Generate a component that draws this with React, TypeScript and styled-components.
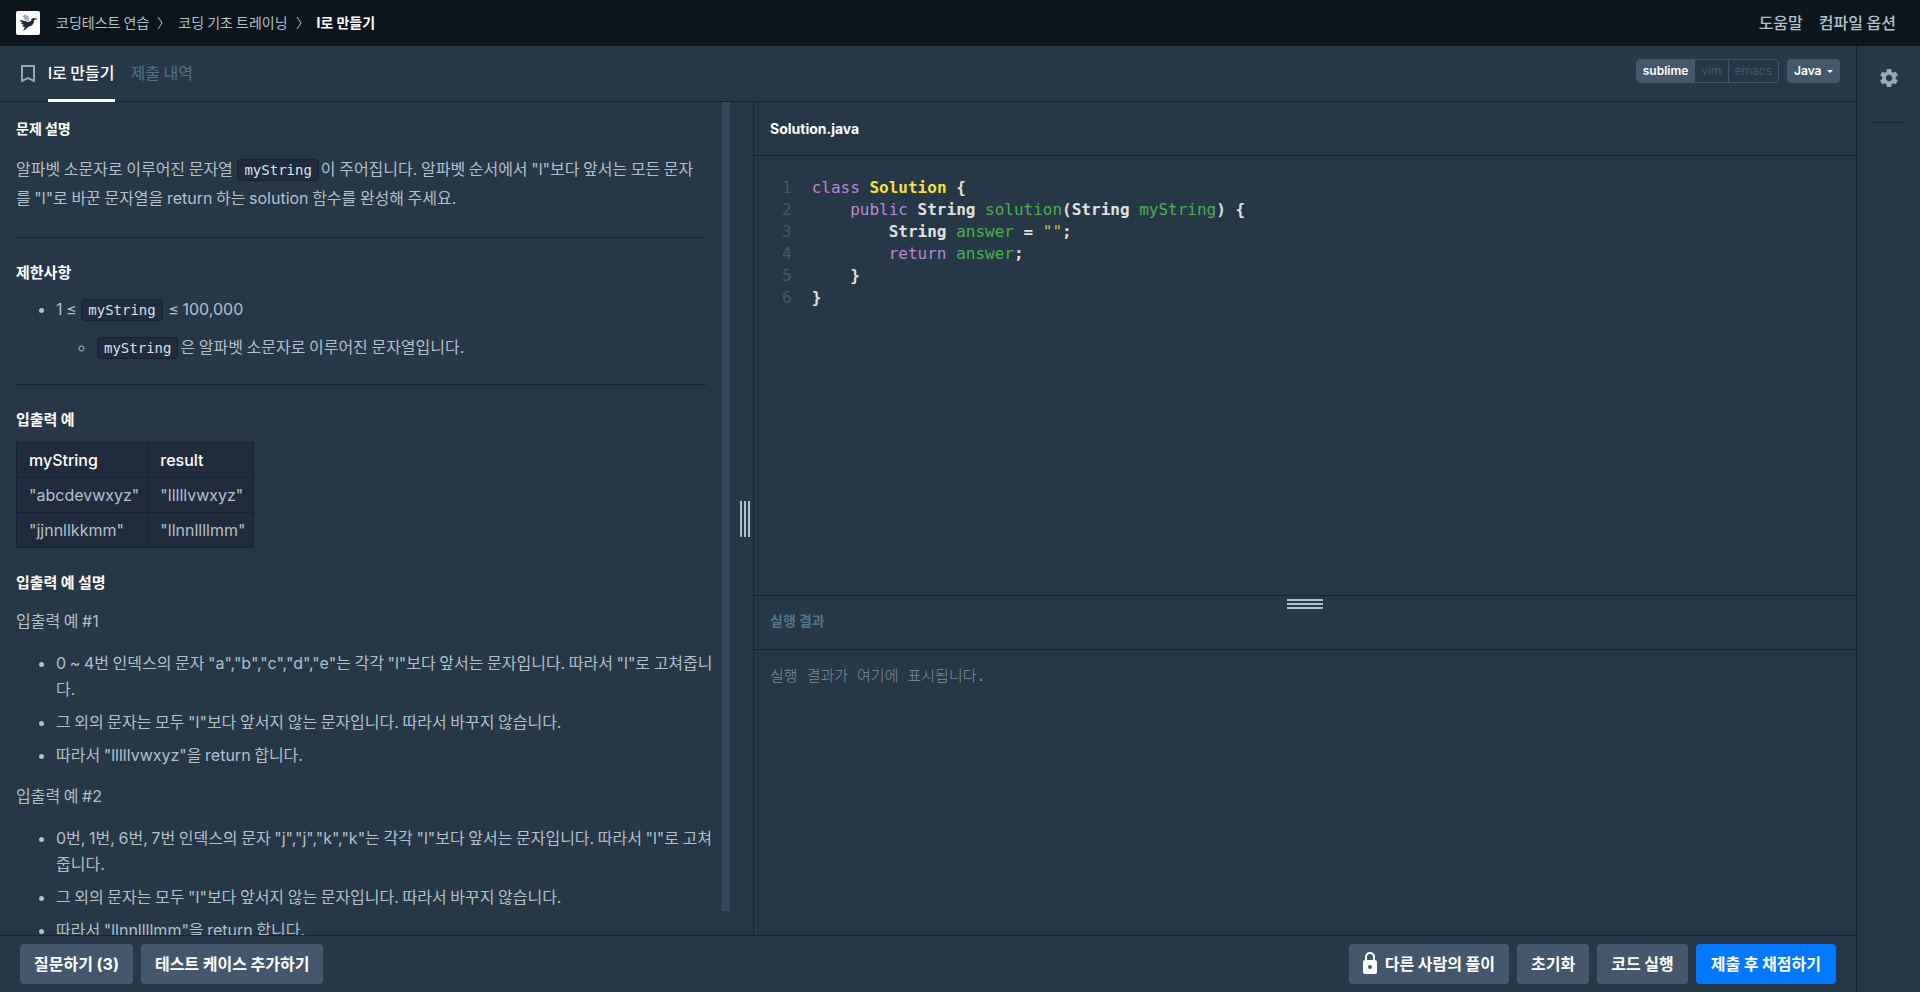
import React from "react";
import styled, { createGlobalStyle, css } from "styled-components";

const korean = `"Noto Sans CJK KR", Inter, sans-serif`;
const latin = `Inter, "Noto Sans CJK KR", sans-serif`;
const mono = `"DejaVu Sans Mono", "Noto Sans CJK KR", monospace`;

const c = {
  topbar: "#0c151c",
  page: "#263747",
  line: "#172334",
  text: "#b2c0cc",
  muted: "#53738a",
  button: "#44576c",
  panel: "#202b3d",
  blue: "#0078ff",
};

const GlobalStyle = createGlobalStyle`
  *, *::before, *::after { box-sizing: border-box; }
  html, body, #root { height: 100%; }
  body {
    margin: 0;
    background: ${c.page};
    color: ${c.text};
    font: 400 16px/24px ${korean};
    overflow: hidden;
  }
  button, select { font-family: inherit; }
  a { color: inherit; text-decoration: none; }
`;

const Page = styled.div`
  display: flex;
  flex-direction: column;
  height: 100vh;
`;

const TopBar = styled.header`
  flex: none;
  display: flex;
  align-items: center;
  justify-content: space-between;
  height: 46px;
  padding: 0 24px 0 16px;
  background: ${c.topbar};
`;

const Breadcrumb = styled.nav`
  display: flex;
  align-items: center;
  font-size: 14px;
  line-height: 20px;
`;

const Logo = styled.a`
  display: flex;
  margin-right: 16px;
`;

const Crumb = styled.a<{ $current?: boolean }>`
  padding-bottom: 2px;
  ${(p) => p.$current && css`
    color: #fff;
    font-weight: 700;
  `}
`;

const Separator = styled.svg`
  margin: 0 14px 0 8px;
`;

const HelpLinks = styled.nav`
  display: flex;
  gap: 16px;
  padding-bottom: 2px;
  font-weight: 500;
  line-height: 22px;
`;

const Body = styled.div`
  flex: 1;
  display: flex;
  min-height: 0;
`;

const Workspace = styled.main`
  flex: 1;
  min-width: 0;
  display: flex;
  flex-direction: column;
`;

const SideBar = styled.aside`
  flex: none;
  width: 64px;
  padding: 20px 16px;
  border-left: 1px solid ${c.line};
`;

const IconButton = styled.button`
  display: flex;
  justify-content: center;
  align-items: center;
  width: 100%;
  height: 24px;
  padding: 0;
  border: 0;
  background: none;
  color: #98a8b9;
`;

const SideRule = styled.hr`
  margin: 32px 0 0;
  border: 0;
  border-top: 1px solid ${c.line};
`;

const Toolbar = styled.div`
  flex: none;
  display: flex;
  align-items: stretch;
  justify-content: space-between;
  height: 56px;
  padding: 0 16px 0 20px;
  border-bottom: 1px solid ${c.line};
`;

const Tabs = styled.div`
  display: flex;
`;

const BookmarkButton = styled(IconButton)`
  width: 16px;
  height: 56px;
  margin-right: 12px;
`;

const Tab = styled.a<{ $active?: boolean }>`
  height: 56px;
  margin-right: 16px;
  line-height: 52px;
  color: ${c.muted};
  ${(p) => p.$active && css`
    color: #fff;
    font-weight: 500;
    border-bottom: 3px solid #fff;
  `}
`;

const Options = styled.div`
  display: flex;
  align-items: flex-start;
  gap: 8px;
  padding-top: 13px;
`;

const KeymapGroup = styled.div`
  display: flex;
  height: 24px;
  border: 1px solid ${c.button};
  border-radius: 4px;
  overflow: hidden;
`;

const KeymapButton = styled.button<{ $active?: boolean }>`
  padding: 0 6px;
  border: 0;
  border-left: 1px solid ${c.button};
  background: none;
  color: ${c.button};
  font: 400 12px/20px ${latin};
  ${(p) => p.$active && css`
    border-left: 0;
    background: ${c.button};
    color: #fff;
    font-weight: 600;
  `}
`;

const SelectBox = styled.div`
  display: flex;
  align-items: center;
  height: 24px;
  padding: 0 7px;
  border-radius: 4px;
  background: ${c.button};
  color: #fff;
`;

const LanguageSelect = styled.select`
  appearance: none;
  padding: 0;
  border: 0;
  background: transparent;
  color: #fff;
  font: 600 12px/20px ${latin};
`;

const Caret = styled.svg`
  margin-left: 5px;
  pointer-events: none;
`;

const Split = styled.div`
  flex: 1;
  min-height: 0;
  display: grid;
  grid-template-columns: 753fr 1103fr;
`;

const GuidePane = styled.section`
  display: flex;
  min-width: 0;
  min-height: 0;
`;

const Guide = styled.div`
  flex: 1;
  min-width: 0;
  padding: 0 16px;
  overflow: hidden;
`;

const Scrollbar = styled.div`
  flex: none;
  width: 8px;
  margin-bottom: 24px;
  background: #37475b;
`;

const Gutter = styled.div`
  flex: none;
  display: flex;
  align-items: center;
  justify-content: flex-end;
  gap: 2px;
  width: 23px;
  padding: 0 3px 0 0;
`;

const GripV = styled.i`
  width: 2px;
  height: 36px;
  background: ${c.text};
`;

const Title = styled.h6`
  margin: 16px 0;
  color: #fff;
  font-size: 14px;
  font-weight: 700;
  line-height: 20px;
`;

const Heading = styled.h6`
  margin: 24px 0 13px;
  color: #fff;
  font-size: 15px;
  font-weight: 600;
  line-height: 20px;
`;

const Paragraph = styled.p`
  margin: 0;
  line-height: 29px;
`;

const Label = styled.p`
  margin: 16px 0 17px;
`;

const Rule = styled.hr`
  margin: 25px 0 24px;
  border: 0;
  border-top: 1px solid ${c.line};
`;

const List = styled.ul`
  margin: 0 -8px 16px 0;
  padding-left: 40px;
  line-height: 26px;

  & & {
    margin: 12px 0 0;
  }
`;

const Item = styled.li`
  margin-bottom: 7px;

  &::marker {
    font-family: ${latin};
  }
`;

const Code = styled.code`
  display: inline-block;
  margin: 0 2px 0 1px;
  padding: 0 6px;
  border: 1px solid ${c.line};
  border-radius: 4px;
  background: ${c.panel};
  color: #d7e2eb;
  font: 14px/20px ${mono};
`;

const Table = styled.table`
  margin-bottom: 24px;
  border-collapse: collapse;
  background: ${c.panel};
  font-family: ${latin};

  th, td {
    padding: 5px 8px 5px 12px;
    border: 1px solid ${c.line};
    text-align: left;
    line-height: 24px;
  }
  th {
    color: #fff;
    font-weight: 500;
  }
`;

const EditorPane = styled.section`
  display: grid;
  grid-template-rows: 54px minmax(0, 440fr) minmax(0, 339fr);
  min-width: 0;
  min-height: 0;
  border-left: 1px solid ${c.line};
`;

const FileName = styled.div`
  padding: 0 16px;
  border-bottom: 1px solid ${c.line};
  color: #fff;
  font: 700 14px/53px ${latin};
`;

const Editor = styled.div`
  padding: 21px 28px;
  border-bottom: 1px solid ${c.line};
  color: #e0e0e0;
  font: 700 16px/22px ${mono};
`;

const CodeLine = styled.div`
  display: flex;
  gap: 20px;
  white-space: pre;
`;

const LineNumber = styled.span`
  color: ${c.button};
  font-weight: 400;
`;

const tokenColors = { kw: "#b988d8", type: "#f5e03b", id: "#4caf50", str: "#d4b83e" };
const Token = styled.span<{ $kind: keyof typeof tokenColors }>`
  color: ${(p) => tokenColors[p.$kind]};
  font-weight: ${(p) => (p.$kind === "type" ? 700 : 400)};
`;

const Console = styled.div`
  display: flex;
  flex-direction: column;
`;

const HandleRow = styled.div`
  flex: none;
  display: flex;
  flex-direction: column;
  align-items: center;
  gap: 2px;
  height: 14px;
  padding-top: 3px;
`;

const GripH = styled.i`
  flex: none;
  width: 36px;
  height: 2px;
  background: ${c.text};
`;

const ConsoleTitle = styled.div`
  flex: none;
  height: 40px;
  padding: 0 16px;
  border-bottom: 1px solid ${c.line};
  color: ${c.muted};
  font-size: 14px;
  font-weight: 700;
  line-height: 20px;
`;

const ConsoleOutput = styled.pre`
  margin: 0;
  padding: 14px 16px;
  color: #78909c;
  font: 300 15px/24px ${mono};
`;

const Footer = styled.footer`
  flex: none;
  display: flex;
  justify-content: space-between;
  height: 57px;
  padding: 8px 20px;
  border-top: 1px solid ${c.line};
`;

const ButtonGroup = styled.div`
  display: flex;
  gap: 8px;
`;

const Button = styled.button<{ $primary?: boolean }>`
  display: flex;
  align-items: center;
  gap: 6px;
  height: 40px;
  padding: ${(p) => (p.$primary ? "0 15px 2px" : "0 14px 2px")};
  border: 0;
  border-radius: 4px;
  background: ${(p) => (p.$primary ? c.blue : c.button)};
  color: #fff;
  font-size: 16px;
  font-weight: 700;
  white-space: nowrap;
`;

const Latin = styled.span`
  font-family: ${latin};
  line-height: 16px;
`;

/* Sets the Latin runs of a Korean sentence in the Latin face. */
const Text = ({ children }: { children: string }) => (
  <span>
    {children.split(/([\x21-\x7e≤]+)/).map((part, i) =>
      i % 2 ? <Latin key={i}>{part}</Latin> : part
    )}
  </span>
);

const Chevron = () => (
  <Separator width="7" height="14" viewBox="0 0 7 14" aria-hidden="true">
    <path d="M1 1l4 6-4 6" fill="none" stroke={c.text} strokeWidth="1" />
  </Separator>
);

const code: React.ReactNode[] = [
  <><Token $kind="kw">class</Token> <Token $kind="type">Solution</Token> {"{"}</>,
  <>{"    "}<Token $kind="kw">public</Token> String <Token $kind="id">solution</Token>(String <Token $kind="id">myString</Token>) {"{"}</>,
  <>{"        "}String <Token $kind="id">answer</Token> = <Token $kind="str">""</Token>;</>,
  <>{"        "}<Token $kind="kw">return</Token> <Token $kind="id">answer</Token>;</>,
  <>{"    }"}</>,
  <>{"}"}</>,
];

export default function App() {
  return (
    <Page>
      <GlobalStyle />
      <TopBar>
        <Breadcrumb aria-label="breadcrumb">
          <Logo href="#" aria-label="홈">
            <svg width="24" height="24" viewBox="0 0 24 24">
              <rect width="24" height="24" rx="2" fill="#fff" />
              <path d="M6 4l2 1 0-2 3 2 1-1 1 3 0 3-4-1z" fill="#a4adb8" />
              <path d="M4 9l5 1 3 1 3-1c0-2 1-3 3-3l4 1-4 1c0 4-2 6-6 7-1 1-3 3-5 4 1-2 1-3 2-4-2 0-3-1-3-1l2-1c-2-1-3-1-3-2l2 0c-2-1-3-2-3-3z" fill="#1e2a3c" />
            </svg>
          </Logo>
          <Crumb href="#">코딩테스트 연습</Crumb>
          <Chevron />
          <Crumb href="#">코딩 기초 트레이닝</Crumb>
          <Chevron />
          <Crumb href="#" $current><Text>l로 만들기</Text></Crumb>
        </Breadcrumb>
        <HelpLinks>
          <a href="#">도움말</a>
          <a href="#">컴파일 옵션</a>
        </HelpLinks>
      </TopBar>

      <Body>
        <Workspace>
          <Toolbar>
            <Tabs>
              <BookmarkButton aria-label="북마크">
                <svg width="16" height="20" viewBox="0 0 16 20">
                  <path d="M2 2h12v15l-6-3-6 3z" fill="none" stroke="currentColor" strokeWidth="2" />
                </svg>
              </BookmarkButton>
              <Tab href="#" $active><Text>l로 만들기</Text></Tab>
              <Tab href="#">제출 내역</Tab>
            </Tabs>
            <Options>
              <KeymapGroup>
                <KeymapButton $active>sublime</KeymapButton>
                <KeymapButton>vim</KeymapButton>
                <KeymapButton>emacs</KeymapButton>
              </KeymapGroup>
              <SelectBox>
                <LanguageSelect aria-label="언어" defaultValue="Java">
                  <option>Java</option>
                </LanguageSelect>
                <Caret width="6" height="3" viewBox="0 0 6 3" aria-hidden="true">
                  <path d="M0 0h6l-3 3z" fill="#fff" />
                </Caret>
              </SelectBox>
            </Options>
          </Toolbar>

          <Split>
            <GuidePane>
              <Guide>
                <Title>문제 설명</Title>
                <Paragraph>
                  알파벳 소문자로 이루어진 문자열 <Code>myString</Code>
                  <Text>{'이 주어집니다. 알파벳 순서에서 "l"보다 앞서는 모든 문자를 "l"로 바꾼 문자열을 return 하는 solution 함수를 완성해 주세요.'}</Text>
                </Paragraph>
                <Rule />
                <Heading>제한사항</Heading>
                <List>
                  <Item>
                    <Text>1 ≤ </Text><Code>myString</Code><Text> ≤ 100,000</Text>
                    <List>
                      <Item><Code>myString</Code><Text>은 알파벳 소문자로 이루어진 문자열입니다.</Text></Item>
                    </List>
                  </Item>
                </List>
                <Rule />
                <Heading>입출력 예</Heading>
                <Table>
                  <thead>
                    <tr><th>myString</th><th>result</th></tr>
                  </thead>
                  <tbody>
                    <tr><td>"abcdevwxyz"</td><td>"lllllvwxyz"</td></tr>
                    <tr><td>"jjnnllkkmm"</td><td>"llnnllllmm"</td></tr>
                  </tbody>
                </Table>
                <Heading>입출력 예 설명</Heading>
                <Label><Text>입출력 예 #1</Text></Label>
                <List>
                  <Item><Text>{'0 ~ 4번 인덱스의 문자 "a","b","c","d","e"는 각각 "l"보다 앞서는 문자입니다. 따라서 "l"로 고쳐줍니다.'}</Text></Item>
                  <Item><Text>{'그 외의 문자는 모두 "l"보다 앞서지 않는 문자입니다. 따라서 바꾸지 않습니다.'}</Text></Item>
                  <Item><Text>{'따라서 "lllllvwxyz"을 return 합니다.'}</Text></Item>
                </List>
                <Label><Text>입출력 예 #2</Text></Label>
                <List>
                  <Item><Text>{'0번, 1번, 6번, 7번 인덱스의 문자 "j","j","k","k"는 각각 "l"보다 앞서는 문자입니다. 따라서 "l"로 고쳐줍니다.'}</Text></Item>
                  <Item><Text>{'그 외의 문자는 모두 "l"보다 앞서지 않는 문자입니다. 따라서 바꾸지 않습니다.'}</Text></Item>
                  <Item><Text>{'따라서 "llnnllllmm"을 return 합니다.'}</Text></Item>
                </List>
              </Guide>
              <Scrollbar />
              <Gutter><GripV /><GripV /><GripV /></Gutter>
            </GuidePane>

            <EditorPane>
              <FileName>Solution.java</FileName>
              <Editor>
                {code.map((line, i) => (
                  <CodeLine key={i}>
                    <LineNumber>{i + 1}</LineNumber>
                    <span>{line}</span>
                  </CodeLine>
                ))}
              </Editor>
              <Console>
                <HandleRow><GripH /><GripH /><GripH /></HandleRow>
                <ConsoleTitle>실행 결과</ConsoleTitle>
                <ConsoleOutput>실행 결과가 여기에 표시됩니다.</ConsoleOutput>
              </Console>
            </EditorPane>
          </Split>

          <Footer>
            <ButtonGroup>
              <Button><Text>질문하기 (3)</Text></Button>
              <Button>테스트 케이스 추가하기</Button>
            </ButtonGroup>
            <ButtonGroup>
              <Button>
                <svg width="16" height="22" viewBox="1 0 16 22" aria-hidden="true">
                  <path d="M4 9V5a4 4 0 0 1 8 0v4" fill="none" stroke="#fff" strokeWidth="2" />
                  <path fillRule="evenodd" d="M3 8h10a2 2 0 0 1 2 2v10a2 2 0 0 1-2 2H3a2 2 0 0 1-2-2V10a2 2 0 0 1 2-2zm5 5a2 2 0 1 0 0 4 2 2 0 0 0 0-4z" fill="#fff" />
                </svg>
                다른 사람의 풀이
              </Button>
              <Button>초기화</Button>
              <Button>코드 실행</Button>
              <Button $primary>제출 후 채점하기</Button>
            </ButtonGroup>
          </Footer>
        </Workspace>

        <SideBar>
          <IconButton aria-label="설정">
            <svg width="18" height="18" viewBox="2 2 20 20" fill="currentColor">
              <path d="M19.43 12.98c.04-.32.07-.64.07-.98s-.03-.66-.07-.98l2.11-1.65c.19-.15.24-.42.12-.64l-2-3.46c-.12-.22-.39-.3-.61-.22l-2.49 1c-.52-.4-1.08-.73-1.69-.98l-.38-2.65C14.46 2.18 14.25 2 14 2h-4c-.25 0-.46.18-.49.42l-.38 2.65c-.61.25-1.17.59-1.69.98l-2.49-1c-.23-.09-.49 0-.61.22l-2 3.46c-.13.22-.07.49.12.64l2.11 1.65c-.04.32-.07.65-.07.98s.03.66.07.98l-2.11 1.65c-.19.15-.24.42-.12.64l2 3.46c.12.22.39.3.61.22l2.49-1c.52.4 1.08.73 1.69.98l.38 2.65c.03.24.24.42.49.42h4c.25 0 .46-.18.49-.42l.38-2.65c.61-.25 1.17-.59 1.69-.98l2.49 1c.23.09.49 0 .61-.22l2-3.46c.12-.22.07-.49-.12-.64l-2.11-1.65zM12 15.5c-1.93 0-3.5-1.57-3.5-3.5s1.57-3.5 3.5-3.5 3.5 1.57 3.5 3.5-1.57 3.5-3.5 3.5z" />
            </svg>
          </IconButton>
          <SideRule />
        </SideBar>
      </Body>
    </Page>
  );
}
